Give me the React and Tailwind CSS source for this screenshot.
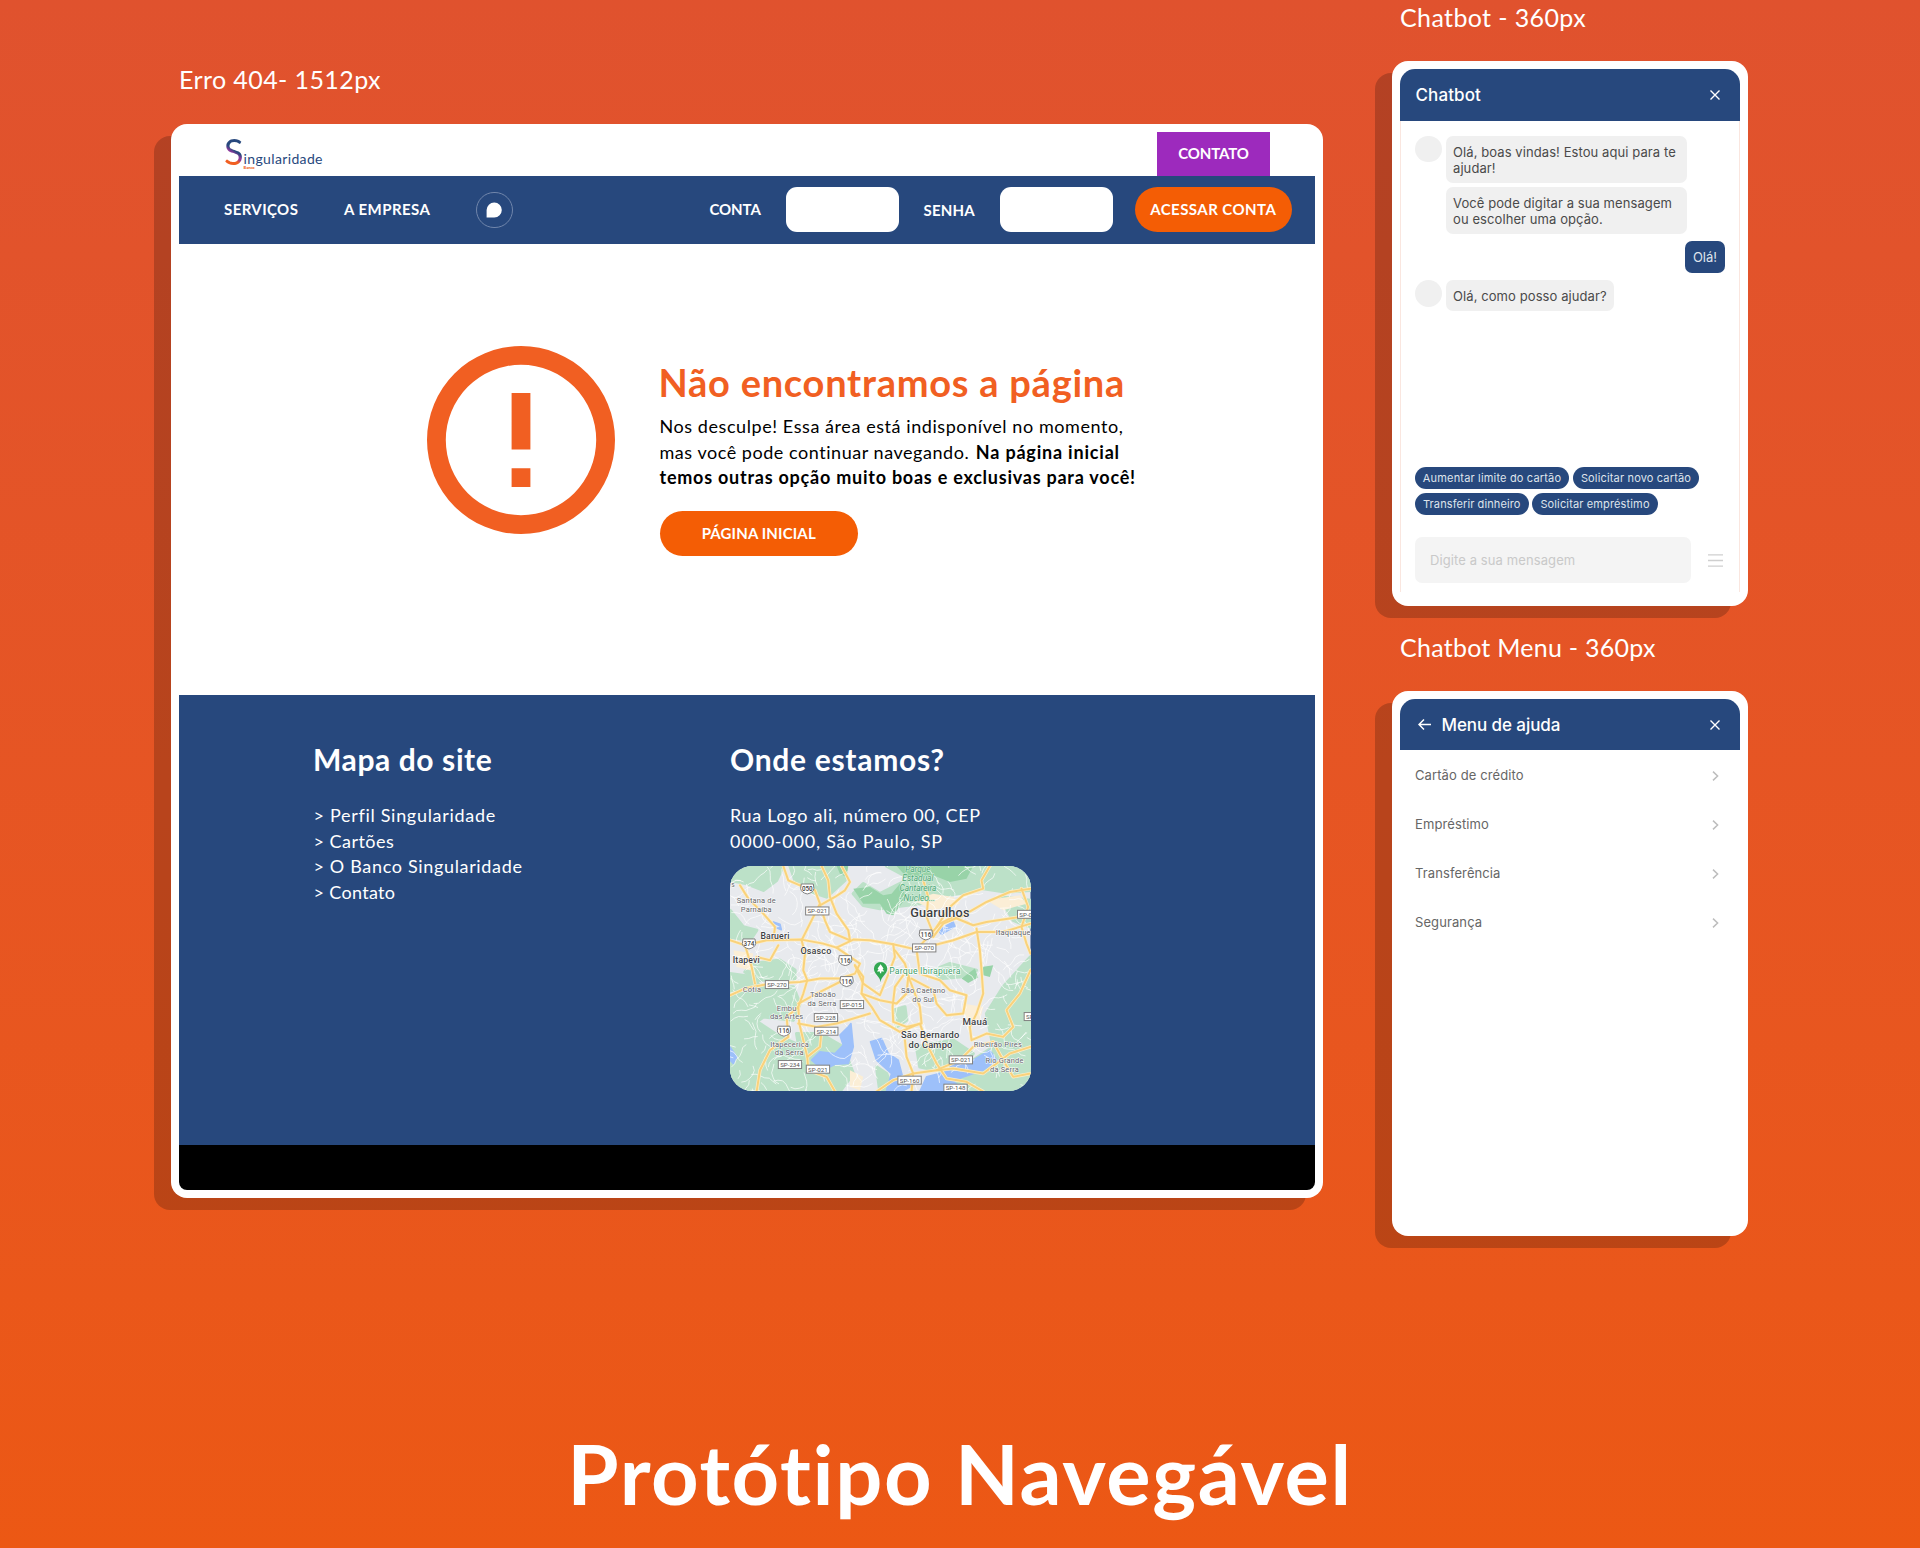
const ROAD = "#f9d27c";

function rng(seed) {
  let s = seed;
  return () => {
    s = (s * 16807) % 2147483647;
    return s / 2147483647;
  };
}

// Wandering polylines that stand for the city's minor streets.
function minorStreets() {
  const r = rng(77);
  const out = [];
  for (let i = 0; i < 330; i++) {
    let x = 30 + r() * 900;
    let y = 20 + r() * 670;
    const central = x > 240 && x < 800 && y > 130 && y < 560;
    let a = r() * Math.PI * 2;
    let d = `M${x.toFixed(0)} ${y.toFixed(0)}`;
    const n = (central ? 7 : 2) + Math.floor(r() * 5);
    for (let k = 0; k < n; k++) {
      a += (r() - 0.5) * 1.3;
      x += Math.cos(a) * 14;
      y += Math.sin(a) * 14;
      d += `L${x.toFixed(0)} ${y.toFixed(0)}`;
    }
    out.push(d);
  }
  return out.join("");
}

const STREETS = minorStreets();

const ROADS = [
  "M190 17L205 60L240 75L285 90L300 130L275 180L245 240L255 280L250 330L262 360L250 400L235 440L238 490L250 540L262 590L265 630L320 650L345 694",
  "M305 17L325 60L330 110L350 160L385 210L390 240",
  "M365 17L390 65L375 90L345 110L300 135L315 180L330 215L390 240",
  "M30 240L75 255L140 240L245 238L310 250L350 262L400 238L450 240L520 252L590 268L660 190L700 170L760 195L800 185L932 165",
  "M60 75L85 115L130 160L165 200L160 240",
  "M640 230L670 190L730 165L800 125L870 95L932 85",
  "M650 200L690 140L730 105L790 85L785 60L810 17",
  "M610 60L625 110L620 170L640 220",
  "M30 405L75 385L150 370L240 365L300 355L360 355L405 340L420 310L350 262",
  "M75 255L95 320L105 370",
  "M110 290L150 300L175 255",
  "M520 252L525 290L510 330L480 405L430 370L405 315",
  "M525 270L555 310L570 360L600 440L605 490L560 500L520 485L518 440L525 380L550 345",
  "M405 315L430 350L425 400L455 440L480 480L540 515L600 490L625 560L650 610L680 655L740 665L790 694",
  "M590 268L600 340L660 360L690 390L740 405L730 460L680 465L650 430L640 390L575 355",
  "M770 205L780 270L785 330L790 400L770 460L750 500L755 540L800 520L850 530L880 500L860 450L900 400L932 330",
  "M905 85L925 140L905 200L920 250L932 280",
  "M555 540L560 590L580 640L650 630L720 600L760 560L820 545",
  "M580 640L575 694",
  "M580 640L520 660L470 694",
  "M650 630L700 625L790 640L870 580L932 560",
  "M235 440L200 470L205 530L150 570L120 630L110 694",
  "M235 490L290 500L350 490L450 460",
  "M262 590L300 560L305 510",
  "M235 430L290 400L370 360",
  "M820 545L850 600L880 650L932 640",
  "M590 268L700 240L770 215L850 215L932 190",
  "M425 400L480 420L530 430L560 400L565 350",
];

const GREENS = [
  "M30 17H190L170 60L130 90L80 70L30 60Z",
  "M210 17H360L375 60L320 110L260 90L225 60Z",
  "M30 150L70 200L110 210L90 240L30 230Z",
  "M100 310L180 300L225 330L225 355L110 360L75 335Z",
  "M30 340L100 350L120 380L220 380L240 430L220 480L130 470L90 500L30 470Z",
  "M30 470L120 490L180 530L250 560L260 694H30Z",
  "M230 520L300 520L370 560L400 640L360 694H260Z",
  "M400 100L430 70L480 100L560 60L620 60L640 110L600 130L480 145L430 135Z",
  "M500 17H932V90L860 95L790 85L720 100L640 110L600 70Z",
  "M800 460L850 380L932 290V694H740L690 660L760 600L820 560Z",
  "M520 450L555 440L560 480L530 500Z",
  "M590 560L700 540L760 580L700 640L600 620Z",
  "M640 330L690 310L770 330L720 350L660 355Z",
  "M470 620L500 640L520 694H480Z",
  "M840 110L932 120V200L880 180Z",
];

const DARK_GREENS = [
  "M400 85L450 80L490 105L515 100L540 70L560 110L520 165L500 160L480 130L430 130Z",
  "M530 17H760L740 55L690 65L640 45L560 50Z",
  "M725 355L765 325L775 352L745 368Z",
  "M350 17H385L380 50L360 40Z",
  "M785 320L820 315L810 350L790 345Z",
];

const SUBURBS = [
  "M580 120L640 100L700 110L720 130L640 150Z",
  "M40 270L100 280L90 330L50 320Z",
  "M730 430L790 440L780 480L740 480Z",
  "M800 120L900 105L920 130L850 150Z",
  "M390 630L430 650L420 690L390 680Z",
];

const WATER = [
  "M385 500L393 490L400 560L385 610L345 612L310 630L275 600L300 575L345 580L370 555L360 525Z",
  "M452 545L485 535L505 580L535 600L548 650L580 675L545 694L500 690L515 640L470 600Z",
  "M600 694L620 650L680 635L700 610L760 600L810 570L830 600L790 630L730 650L700 665L740 690L650 694Z",
  "M655 210L700 185L705 198L665 222Z",
  "M30 560L50 590L40 610L30 600Z",
  "M160 185L180 192L184 208L170 202Z",
];

const PLACES = [
  [109, 129, "Santana de", 22.5, 400],
  [109, 155, "Parnaíba", 22.5, 400],
  [165, 237, "Barueri", 26, 500],
  [288, 282, "Osasco", 27, 500],
  [79, 309, "Itapevi", 26, 500],
  [96, 394, "Cotia", 22.5, 400],
  [309, 411, "Taboão", 22.5, 400],
  [306, 437, "da Serra", 22.5, 400],
  [200, 452, "Embu", 22.5, 400],
  [200, 475, "das Artes", 22.5, 400],
  [209, 559, "Itapecerica", 22.5, 400],
  [208, 583, "da Serra", 22.5, 400],
  [660, 170, "Guarulhos", 38, 500],
  [880, 224, "Itaquaque", 22.5, 400],
  [610, 399, "São Caetano", 22.5, 400],
  [610, 425, "do Sul", 22.5, 400],
  [765, 493, "Mauá", 29, 500],
  [631, 533, "São Bernardo", 28, 500],
  [632, 564, "do Campo", 28, 500],
  [834, 560, "Ribeirão Pires", 22.5, 400],
  [854, 607, "Rio Grande", 22.5, 400],
  [854, 634, "da Serra", 22.5, 400],
  [39, 79, "s", 20, 400],
];

const SHIELDS = [
  [262, 85, "050"],
  [87, 250, "374"],
  [618, 223, "116"],
  [376, 300, "116"],
  [380, 363, "116"],
  [192, 512, "116"],
];

const ROUTES = [
  [292, 152, "SP-021"],
  [613, 263, "SP-070"],
  [171, 373, "SP-270"],
  [396, 433, "SP-015"],
  [318, 472, "SP-228"],
  [319, 513, "SP-214"],
  [210, 613, "SP-234"],
  [294, 627, "SP-021"],
  [569, 660, "SP-160"],
  [723, 599, "SP-021"],
  [707, 684, "SP-148"],
  [928, 162, "SP-021"],
  [948, 469, "SP-043"],
];

function CityMap() {
  return (
    <svg viewBox="30 17 902 677" preserveAspectRatio="none" className="block h-full w-full font-['Roboto',sans-serif]">
      <rect x="30" y="17" width="902" height="677" fill="#e8eaee" />
      {GREENS.map((d) => <path key={d} d={d} fill="#bce1c8" stroke="#bce1c8" strokeWidth="10" strokeLinejoin="round" />)}
      {DARK_GREENS.map((d) => <path key={d} d={d} fill="#98d3a8" />)}
      {SUBURBS.map((d) => <path key={d} d={d} fill="#fbeed6" />)}
      {WATER.map((d) => <path key={d} d={d} fill="#9dc0fa" stroke="#9dc0fa" strokeWidth="5" strokeLinejoin="round" />)}
      <path d={STREETS} fill="none" stroke="#fff" strokeWidth="2.4" strokeLinejoin="round" opacity="0.85" />
      <g fill="none" strokeLinejoin="round" strokeLinecap="round">
        {ROADS.map((d) => <path key={d} d={d} stroke="#fdeec8" strokeWidth="10" />)}
        {ROADS.map((d) => <path key={d} d={d} stroke={ROAD} strokeWidth="6" />)}
      </g>
      {ROUTES.map(([x, y, t], i) => (
        <g key={i}>
          <rect x={x - 35} y={y - 12} width="70" height="24" fill="#fff" stroke="#808080" strokeWidth="3" />
          <text x={x} y={y + 7} fontSize="18.5" textAnchor="middle" fill="#555">{t}</text>
        </g>
      ))}
      {SHIELDS.map(([x, y, t], i) => (
        <g key={i}>
          <path d={`M${x - 18} ${y - 14}H${x + 18}L${x + 20} ${y}Q${x + 18} ${y + 12} ${x} ${y + 16}Q${x - 18} ${y + 12} ${x - 20} ${y}Z`} fill="#fff" stroke="#808080" strokeWidth="3" />
          <text x={x} y={y + 7} fontSize="19" fontWeight="500" textAnchor="middle" fill="#444">{t}</text>
        </g>
      ))}
      {PLACES.map(([x, y, t, s, w], i) => (
        <text key={i} x={x} y={y} fontSize={s} fontWeight={w} textAnchor="middle" fill={w === 500 ? "#3c4043" : "#5f6368"} stroke="#fff" strokeWidth="3" paintOrder="stroke" letterSpacing="0.5">{t}</text>
      ))}
      <g fontStyle="italic" fontSize="25" textAnchor="middle" fill="#4fa777" stroke="#d6efdd" strokeWidth="3" paintOrder="stroke">
        <text x="594" y="35">Parque</text>
        <text x="594" y="63">Estadual</text>
        <text x="594" y="92">Cantareira</text>
        <text x="592" y="121">- Núcleo...</text>
      </g>
      <text x="508" y="341" fontSize="26" fill="#3d9c6c" stroke="#fff" strokeWidth="4" paintOrder="stroke" textLength="214">Parque Ibirapuera</text>
      <path d="M482 366C480 348 462 343 462 325A20 20 0 0 1 502 325C502 343 484 348 482 366Z" fill="#34a853" />
      <path d="M482 312L491 325L488 327L493 334H484V339H480V334H471L476 327L473 325Z" fill="#fff" />
    </svg>
  );
}

function Close() {
  return (
    <svg viewBox="0 0 10 10" className="h-[10px] w-[10px]" fill="none" stroke="#fff" strokeWidth="1.4">
      <path d="M.5.5l9 9M9.5.5l-9 9" />
    </svg>
  );
}

function FrameLabel({ children, className }) {
  return <h2 className={`h-8 pt-px text-[25px] leading-8 font-normal whitespace-nowrap ${className}`}>{children}</h2>;
}

function ErrorPage() {
  return (
    <div className="h-[1074.5px] w-[1152px] rounded-[16px] bg-white p-2 shadow-[-17px_12px_0_0_rgba(0,0,0,0.2)]">
      <div className="overflow-hidden rounded-b-[8px] text-white">
        <div className="flex h-[44.5px] justify-between px-[45px]">
          <div className="flex text-[#27487d]">
            <span className="h-[44px] bg-[linear-gradient(215deg,#27487d_43%,#8e3a9d_50%,#8e3a9d_53%,#f15f22_60%)] bg-clip-text text-[36px] leading-[38px] text-transparent">S</span>
            <span className="relative text-[14px] leading-[54px] tracking-[0.36px]">
              ingularidade
              <span className="absolute top-[33px] left-0 text-[4px] leading-[5px] font-black tracking-normal text-[#f15f22]">Banco</span>
            </span>
          </div>
          <a className="flex w-[113px] items-center justify-center bg-[#9d2abd] pb-[2px] text-[15px] font-bold tracking-[-0.1px]">CONTATO</a>
        </div>
        <nav className="flex h-[67.5px] items-center bg-[#27487d] pl-[45px] text-[15px] font-bold">
          <a className="w-[120px] pb-px tracking-[0.4px]">SERVIÇOS</a>
          <a className="w-[132px] pb-px tracking-[0.45px]">A EMPRESA</a>
          <span className="flex h-[36.5px] w-[36.5px] items-center justify-center rounded-full border border-[#7186ab]">
            <svg viewBox="0 0 16 16" className="h-[16px] w-[16px]" fill="#fff"><path d="M8.3.5A7.5 7.5 0 1 1 8.3 15.5H.6V8A7.6 7.6 0 0 1 8.3.5Z" /></svg>
          </span>
          <span className="ml-[197px] w-[76.5px] pb-px tracking-[-0.1px]">CONTA</span>
          <span className="h-[45px] w-[112.5px] rounded-[11px] bg-white" />
          <span className="ml-[25px] w-[76.5px] tracking-[0.2px]">SENHA</span>
          <span className="h-[45px] w-[112.5px] rounded-[11px] bg-white" />
          <button className="ml-[22.5px] h-[45px] w-[156.5px] rounded-full bg-[#f45d05] pb-px tracking-[0.45px] whitespace-nowrap">ACESSAR CONTA</button>
        </nav>
        <main className="flex h-[451px] bg-white pt-[102px] pl-[247.5px] text-black">
          <svg viewBox="2 2 20 20" className="h-[188px] w-[188px]" fill="#f15f22">
            <path d="M11 15h2v2h-2zm0-8h2v6h-2zM12 2a10 10 0 1 0 0 20 10 10 0 0 0 0-20zm0 18a8 8 0 1 1 0-16 8 8 0 0 1 0 16z" />
          </svg>
          <div className="ml-[45px] pt-[14px] whitespace-nowrap">
            <h1 className="-ml-px text-[38px] leading-[45px] font-bold tracking-[0.75px] text-[#f15f22]">Não encontramos a página</h1>
            <p className="mt-[9.5px] text-[18px] leading-[25.6px]">
              <span className="tracking-[0.57px]">Nos desculpe! Essa área está indisponível no momento,</span><br />
              <span className="tracking-[0.54px]">mas você pode continuar navegando.</span> <b className="ml-[2px] tracking-[0.8px]">Na página inicial</b><br />
              <b className="tracking-[0.76px]">temos outras opção muito boas e exclusivas para você!</b>
            </p>
            <button className="mt-[20px] h-[45px] w-[198.5px] rounded-full bg-[#f45d05] text-[15px] font-bold tracking-[0.15px] text-white">PÁGINA INICIAL</button>
          </div>
        </main>
        <footer className="flex h-[450.5px] bg-[#27487d] pt-[46px] pl-[135px] text-[18px] leading-[25.6px]">
          <section className="w-[416px]">
            <h3 className="-ml-px text-[30px] leading-9 font-bold tracking-[0.6px]">Mapa do site</h3>
            <ul className="mt-[26.5px] -ml-[0.5px]">
              <li className="tracking-[0.7px]">&gt; Perfil Singularidade</li>
              <li className="tracking-[0.48px]">&gt; Cartões</li>
              <li className="tracking-[0.66px]">&gt; O Banco Singularidade</li>
              <li className="tracking-[0.33px]">&gt; Contato</li>
            </ul>
          </section>
          <section>
            <h3 className="text-[30px] leading-9 font-bold tracking-[0.7px]">Onde estamos?</h3>
            <p className="mt-[26.5px]"><span className="tracking-[0.68px]">Rua Logo ali, número 00, CEP</span><br /><span className="tracking-[0.77px]">0000-000, São Paulo, SP</span></p>
            <div className="mt-[11.5px] h-[225.5px] w-[300.5px] overflow-hidden rounded-[22px]"><CityMap /></div>
          </section>
        </footer>
        <div className="h-[45px] bg-black" />
      </div>
    </div>
  );
}

function Card({ children }) {
  return <div className="mt-[29px] h-[545px] w-[356px] rounded-[16px] bg-white p-2 font-['Inter',sans-serif] shadow-[-17px_12px_0_0_rgba(0,0,0,0.2)]">{children}</div>;
}

function Chip({ children, className }) {
  return <span className={`flex h-[22px] items-center justify-center rounded-full bg-[#27487d] text-[11px] whitespace-nowrap text-[#dfe4ec] ${className}`}>{children}</span>;
}

function Chatbot() {
  return (
    <Card>
      <header className="flex h-[51.5px] items-center justify-between rounded-t-[15px] bg-[#27487d] pr-[20px] pl-[15.5px] text-[17px] font-medium tracking-[0.1px]"><span className="pt-[2px]">Chatbot</span><Close /></header>
      <div className="h-[471px] border-x border-[#fae6df] px-[14px] pt-[15px] text-[13px] leading-4 tracking-[0.085px] text-[#4a4a4a]">
        <div className="flex">
          <span className="h-[26.5px] w-[26.5px] rounded-full bg-[#f0f0f0]" />
          <div className="ml-[4px] flex w-[241.5px] flex-col gap-1 whitespace-nowrap">
            <p className="h-[47px] rounded-[7px] bg-[#f0f0f0] px-[7.5px] pt-[8px]">Olá, boas vindas! Estou aqui para te<br />ajudar!</p>
            <p className="h-[47px] rounded-[7px] bg-[#f0f0f0] px-[7.5px] pt-[8px]">Você pode digitar a sua mensagem<br />ou escolher uma opção.</p>
          </div>
        </div>
        <div className="mt-[7.5px] flex justify-end"><p className="flex h-[31.5px] w-[40px] items-center justify-center rounded-[7px] bg-[#27487d] tracking-normal text-[#dfe4ec]">Olá!</p></div>
        <div className="mt-[7.5px] flex">
          <span className="h-[26.5px] w-[26.5px] rounded-full bg-[#f0f0f0]" />
          <p className="ml-[4px] h-[31px] w-[168.5px] rounded-[7px] bg-[#f0f0f0] px-[7.5px] pt-[8px] whitespace-nowrap">Olá, como posso ajudar?</p>
        </div>
        <div className="mt-[156px] flex gap-1"><Chip className="w-[154px] tracking-[0.17px]">Aumentar limite do cartão</Chip><Chip className="w-[126px] tracking-[0.16px]">Solicitar novo cartão</Chip></div>
        <div className="mt-[3.5px] flex gap-[3.5px]"><Chip className="w-[113.5px] tracking-[0.1px]">Transferir dinheiro</Chip><Chip className="w-[126px] tracking-[0.14px]">Solicitar empréstimo</Chip></div>
        <div className="mt-[22.5px] flex items-center">
          <div className="flex h-[46px] w-[276px] items-center rounded-[7px] bg-[#f4f4f4] pl-[15px] tracking-[0.1px] text-[#c9c9c9]">Digite a sua mensagem</div>
          <svg viewBox="0 0 15 13" className="ml-[17px] h-[13px] w-[15px]" stroke="#cfcfcf" strokeWidth="1.4"><path d="M0 .9h15M0 6.5h15M0 12.1h15" /></svg>
        </div>
      </div>
    </Card>
  );
}

function HelpMenu() {
  return (
    <Card>
      <header className="flex h-[51px] items-center rounded-t-[15px] bg-[#27487d] pr-[20px] pl-[18px] text-[17px] font-medium">
        <svg viewBox="0 0 13 11" className="h-[11px] w-[13px]" fill="none" stroke="#fff" strokeWidth="1.5"><path d="M13 5.5H1M6 .5l-5 5 5 5" /></svg>
        <span className="mr-auto ml-[10.5px] pt-[2px] tracking-[-0.08px]">Menu de ajuda</span>
        <Close />
      </header>
      <ul className="pt-px text-[13px] text-[#666]">
        {["Cartão de crédito", "Empréstimo", "Transferência", "Segurança"].map((t) => (
          <li key={t} className="flex h-[49.1px] items-center justify-between pr-[21px] pl-[15px] tracking-[0.1px]">{t}
            <svg viewBox="0 0 7 10" className="h-[10px] w-[7px]" fill="none" stroke="#bdbdbd" strokeWidth="1.5"><path d="M1 .6L5.6 5 1 9.4" /></svg>
          </li>
        ))}
      </ul>
    </Card>
  );
}

export default function App() {
  return (
    <div className="flex h-[1548px] w-[1920px] flex-col overflow-hidden bg-linear-to-b from-[#e0522e] to-[#ec5814] font-['Lato',sans-serif] text-white">
      <div className="flex h-[1422px]">
        <section className="mt-[62px] ml-[171px] w-[1152px]">
          <FrameLabel className="pl-[8px] tracking-[0.4px]">Erro 404- 1512px</FrameLabel>
          <div className="mt-[29.5px]"><ErrorPage /></div>
        </section>
        <section className="ml-[69px] w-[356px]">
          <FrameLabel className="pl-[8px] tracking-[0.38px]">Chatbot - 360px</FrameLabel>
          <Chatbot />
          <div className="h-6" />
          <FrameLabel className="pl-[8px] tracking-[0.25px]">Chatbot Menu - 360px</FrameLabel>
          <HelpMenu />
        </section>
      </div>
      <h1 className="pt-px text-center text-[83px] leading-[100px] font-bold tracking-[1.6px] whitespace-nowrap">Protótipo Navegável</h1>
    </div>
  );
}
